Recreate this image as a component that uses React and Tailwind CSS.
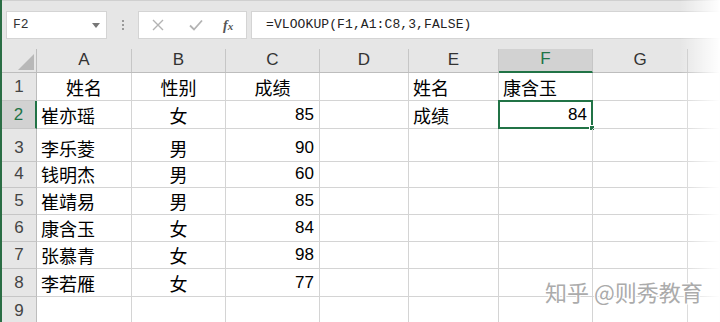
import React from "react";

const cols = [
  { key: "A", w: "w-[95px]" },
  { key: "B", w: "w-[94px]" },
  { key: "C", w: "w-[94px]" },
  { key: "D", w: "w-[89px]" },
  { key: "E", w: "w-[90px]" },
  { key: "F", w: "w-[94px]" },
  { key: "G", w: "w-[95px]" },
  { key: "H", w: "flex-1" },
];

const rows = [
  { n: 1, h: "h-[28px]", cells: { A: ["姓名", "c"], B: ["性别", "c"], C: ["成绩", "c"], E: ["姓名", "l"], F: ["康含玉", "l"] } },
  { n: 2, h: "h-[28px]", cells: { A: ["崔亦瑶", "l"], B: ["女", "c"], C: ["85", "r"], E: ["成绩", "l"], F: ["84", "r"] } },
  { n: 3, h: "h-[33px]", cells: { A: ["李乐菱", "l"], B: ["男", "c"], C: ["90", "r"] } },
  { n: 4, h: "h-[26px]", cells: { A: ["钱明杰", "l"], B: ["男", "c"], C: ["60", "r"] } },
  { n: 5, h: "h-[27px]", cells: { A: ["崔靖易", "l"], B: ["男", "c"], C: ["85", "r"] } },
  { n: 6, h: "h-[27px]", cells: { A: ["康含玉", "l"], B: ["女", "c"], C: ["84", "r"] } },
  { n: 7, h: "h-[27px]", cells: { A: ["张慕青", "l"], B: ["女", "c"], C: ["98", "r"] } },
  { n: 8, h: "h-[28px]", cells: { A: ["李若雁", "l"], B: ["女", "c"], C: ["77", "r"] } },
  { n: 9, h: "h-[28px]", cells: {} },
];

const cjk = "font-['Noto_Sans_CJK_SC',sans-serif]";
const latin = "font-['Liberation_Sans',sans-serif]";

function Cell({ col, value, selected }) {
  const [text, align] = value || ["", "l"];
  const isNum = /^\d+$/.test(text);
  const justify = align === "r" ? "justify-end pr-[5px]" : align === "c" ? "justify-center" : "justify-start pl-[4px]";
  return (
    <div className={`${col.w} relative flex items-end pb-[1px] border-r border-b border-[#d4d4d4] ${justify}`}>
      <span className={`${isNum ? latin + " text-[17px]" : cjk + " text-[18px]"} leading-[24px] text-black`}>{text}</span>
      {selected && (
        <div className="absolute -left-[1px] -top-[1px] -right-[1px] -bottom-[1px] border-2 border-[#217346]">
          <div className="absolute -right-[4px] -bottom-[4px] w-[6px] h-[6px] bg-[#217346] border border-white" />
        </div>
      )}
    </div>
  );
}

export default function App() {
  return (
    <div className="relative w-[720px] h-[322px] overflow-hidden bg-white border-l-2 border-[#2b6e45]">
      {/* formula bar */}
      <div className="h-[49px] bg-[#e6e6e6] border-t border-[#d0d0d0] flex items-start pt-[10px]">
        <div className="ml-[4px] w-[101px] h-[28px] bg-white border border-[#d4d4d4] flex items-center justify-between pl-[6px] pr-[6px]">
          <span className="font-['Liberation_Mono',monospace] text-[13px] text-[#333]">F2</span>
          <span className="w-0 h-0 border-l-[4px] border-r-[4px] border-t-[5px] border-l-transparent border-r-transparent border-t-[#777]" />
        </div>
        <div className="w-[31px] h-[28px] flex flex-col items-center justify-center gap-[2px]">
          <span className="w-[2px] h-[2px] bg-[#9a9a9a]" />
          <span className="w-[2px] h-[2px] bg-[#9a9a9a]" />
          <span className="w-[2px] h-[2px] bg-[#9a9a9a]" />
        </div>
        <div className="w-[109px] h-[28px] bg-white border border-[#d4d4d4] flex items-center pl-[13px]">
          <svg width="12" height="12" viewBox="0 0 12 12" className="mr-[25px]">
            <path d="M1 1 L11 11 M11 1 L1 11" stroke="#b3b3b3" strokeWidth="1.4" fill="none" />
          </svg>
          <svg width="14" height="12" viewBox="0 0 14 12" className="mr-[20px]">
            <path d="M1 6.5 L5 10.5 L13 1.5" stroke="#b3b3b3" strokeWidth="1.8" fill="none" />
          </svg>
          <span className="font-['Liberation_Serif',serif] italic font-bold text-[14px] text-[#555]">f<span className="text-[11px]">x</span></span>
        </div>
        <div className="ml-[4px] flex-1 h-[28px] bg-white border border-[#d4d4d4] border-r-0 flex items-center pl-[14px]">
          <span className="font-['Liberation_Mono',monospace] text-[13px] text-[#222] tracking-[0.1px]">=VLOOKUP(F1,A1:C8,3,FALSE)</span>
        </div>
      </div>

      {/* column headers */}
      <div className="flex h-[24px] bg-[#e6e6e6] border-b border-[#bdbdbd]">
        <div className="w-[35px] relative border-r border-[#bdbdbd]">
          <svg className="absolute right-[2px] bottom-[2px]" width="16" height="16" viewBox="0 0 16 16">
            <path d="M16 0 L16 16 L0 16 Z" fill="#b8b8b8" />
          </svg>
        </div>
        {cols.map((c) => (
          <div
            key={c.key}
            className={`${c.w} flex items-end justify-center pb-[1px] border-r border-[#c6c6c6] ${latin} text-[17px] leading-[22px] ${
              c.key === "F" ? "bg-[#d2d2d2] text-[#217346] border-b-2 border-b-[#217346] -mb-[1px]" : "text-[#333]"
            }`}
          >
            {c.key === "H" ? "" : c.key}
          </div>
        ))}
      </div>

      {/* rows */}
      {rows.map((r) => (
        <div key={r.n} className={`flex ${r.h}`}>
          <div
            className={`w-[35px] flex items-end justify-center pb-[1px] border-b border-[#c6c6c6] ${latin} text-[17px] leading-[24px] ${
              r.n === 2 ? "bg-[#d2d2d2] text-[#217346] border-r-2 border-r-[#217346]" : "bg-[#e6e6e6] text-[#444] border-r border-r-[#bdbdbd]"
            }`}
          >
            {r.n}
          </div>
          {cols.map((c) => (
            <Cell key={c.key} col={c} value={r.cells[c.key]} selected={r.n === 2 && c.key === "F"} />
          ))}
        </div>
      ))}

      {/* right edge fade */}
      <div className="pointer-events-none absolute right-0 top-0 h-full w-[40px] bg-gradient-to-r from-transparent to-white" />

      {/* watermark */}
      <div
        className={`pointer-events-none absolute left-[543px] top-[275px] ${cjk} text-[22px] text-[#ababab]`}
        style={{ textShadow: "1px 1px 0 #fff, -1px -1px 0 #fff, 1px -1px 0 #fff, -1px 1px 0 #fff" }}
      >
        知乎 @则秀教育
      </div>
    </div>
  );
}
